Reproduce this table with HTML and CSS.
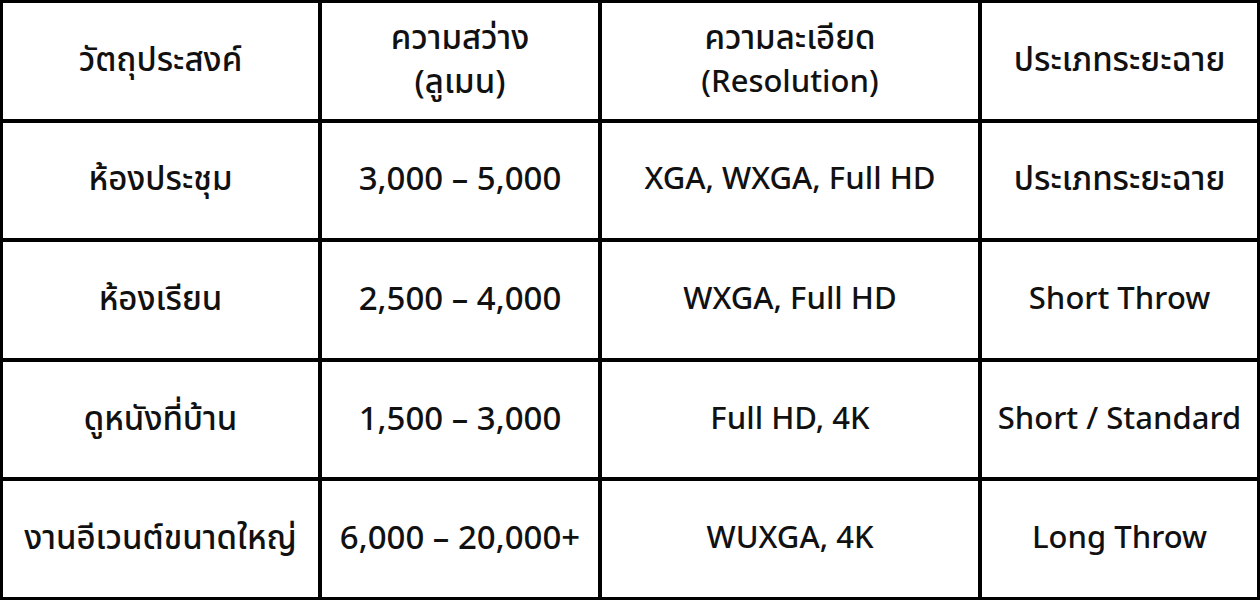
FILE: index.html
```html
<!DOCTYPE html>
<html lang="th">
<head>
<meta charset="utf-8">
<link rel="stylesheet" href="styles.css">
</head>
<body>
<div class="table">
  <div class="cell th"><p>วัตถุประสงค์</p></div>
  <div class="cell th"><p>ความสว่าง</p><p>(ลูเมน)</p></div>
  <div class="cell"><p class="th">ความละเอียด</p><p>(Resolution)</p></div>
  <div class="cell th"><p>ประเภทระยะฉาย</p></div>

  <div class="cell th"><p>ห้องประชุม</p></div>
  <div class="cell num"><p>3,000 – 5,000</p></div>
  <div class="cell"><p>XGA, WXGA, Full HD</p></div>
  <div class="cell th"><p>ประเภทระยะฉาย</p></div>

  <div class="cell th"><p>ห้องเรียน</p></div>
  <div class="cell num"><p>2,500 – 4,000</p></div>
  <div class="cell"><p>WXGA, Full HD</p></div>
  <div class="cell"><p>Short Throw</p></div>

  <div class="cell th"><p>ดูหนังที่บ้าน</p></div>
  <div class="cell num"><p>1,500 – 3,000</p></div>
  <div class="cell"><p>Full HD, 4K</p></div>
  <div class="cell"><p>Short / Standard</p></div>

  <div class="cell th"><p>งานอีเวนต์ขนาดใหญ่</p></div>
  <div class="cell num"><p>6,000 – 20,000+</p></div>
  <div class="cell"><p>WUXGA, 4K</p></div>
  <div class="cell"><p>Long Throw</p></div>
</div>
</body>
</html>
```

FILE: styles.css
```css
html, body {
  margin: 0;
  padding: 0;
  background: #ffffff;
}
.table {
  box-sizing: border-box;
  width: 1260px;
  height: 600px;
  padding: 3px;
  background: #000000;
  display: grid;
  grid-template-columns: 315px 276px 376px 275px;
  grid-template-rows: repeat(5, 1fr);
  gap: 4px;
}
.cell {
  background: #ffffff;
  display: flex;
  flex-direction: column;
  align-items: center;
  justify-content: center;
  text-align: center;
  font-family: "Noto Sans Thai", "Noto Sans", sans-serif;
  font-weight: 500;
  font-size: 31px;
  line-height: 44px;
  color: #111111;
}
.cell p {
  margin: 0;
  white-space: nowrap;
}
.th {
  font-size: 33px;
}
.num {
  font-size: 33px;
}
```
